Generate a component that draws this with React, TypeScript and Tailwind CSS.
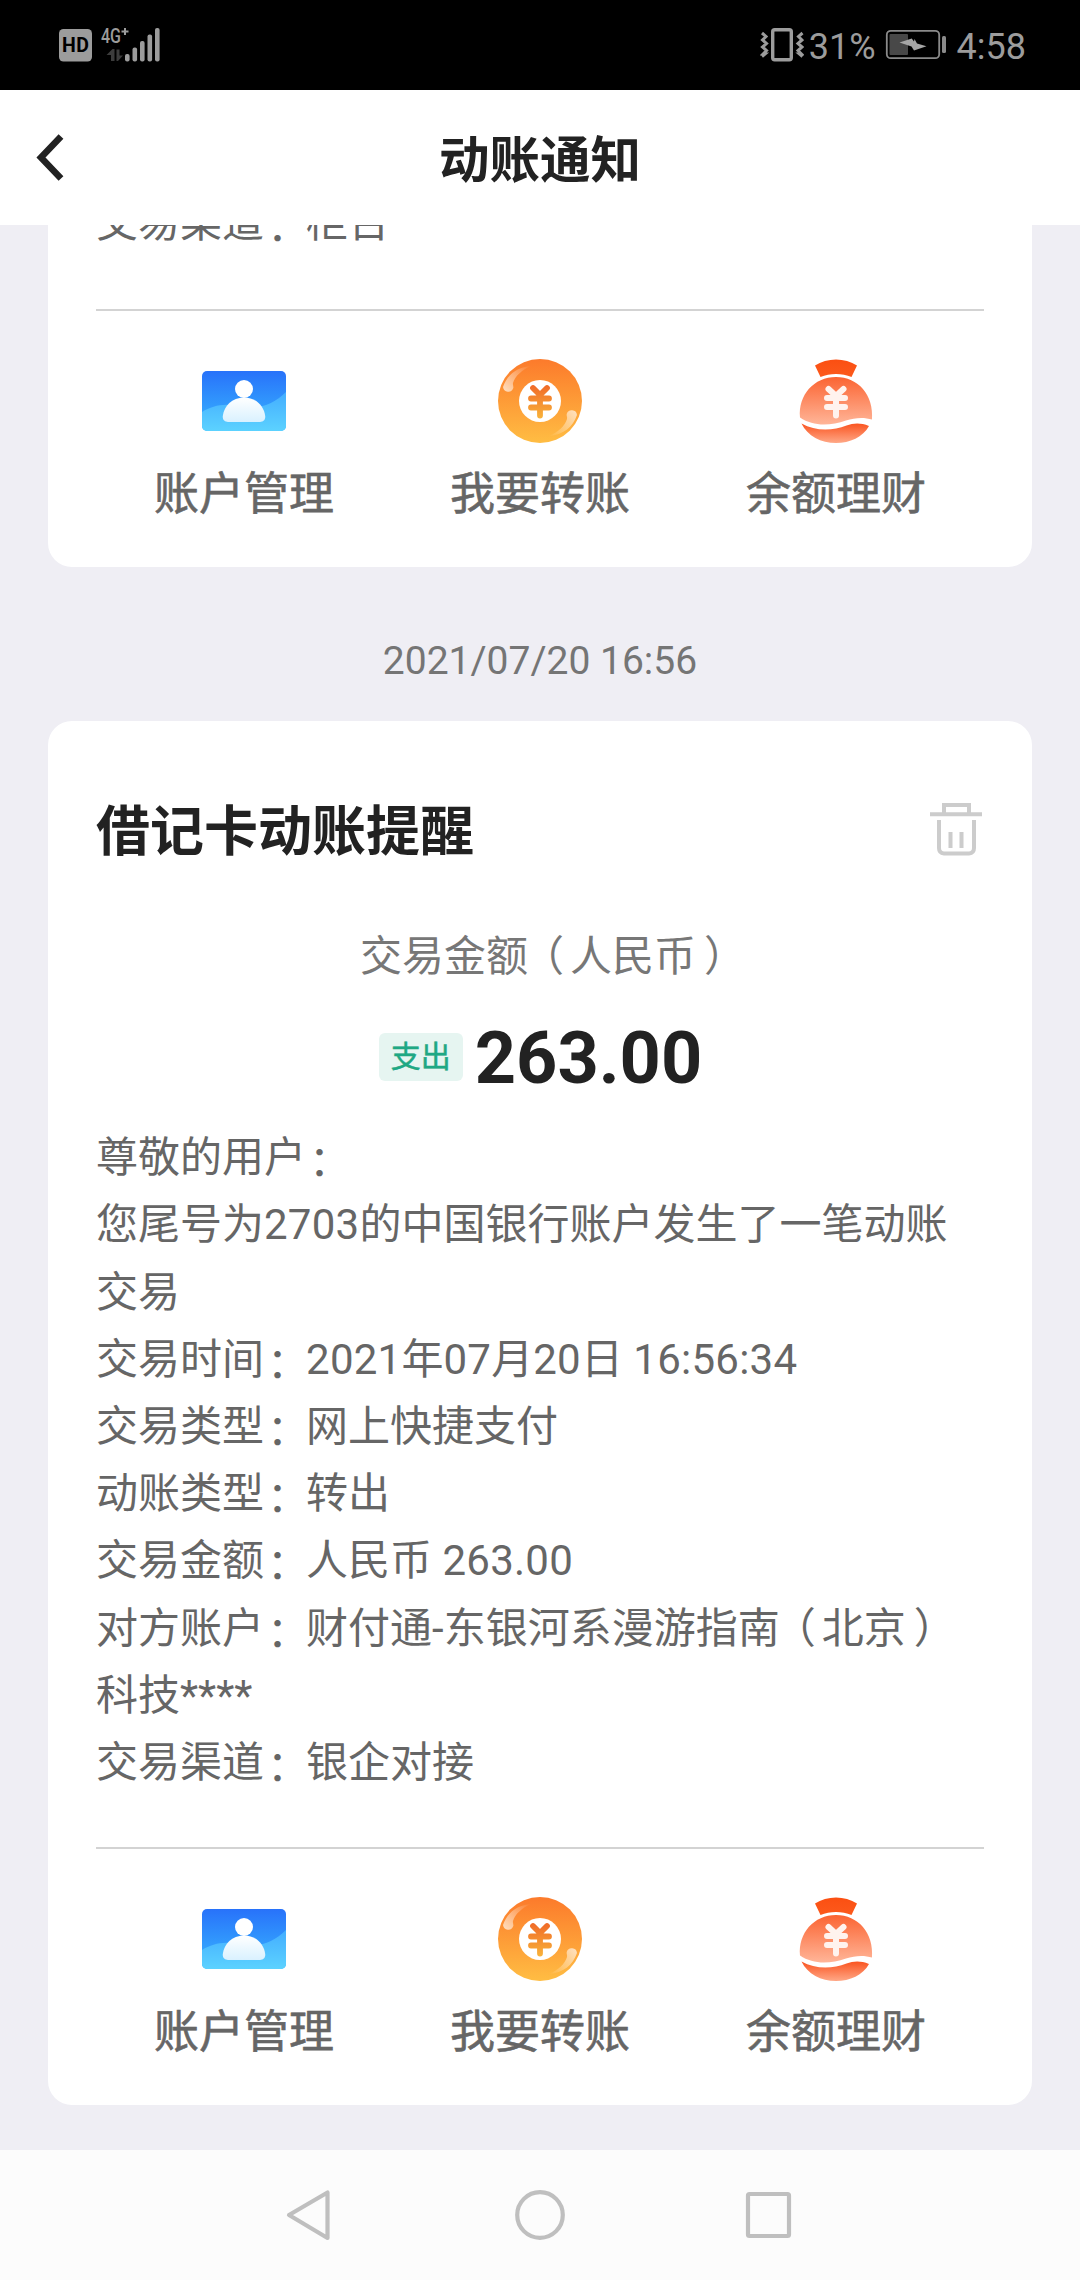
import { Fragment, useId } from 'react';

const bodyLines = [
  '尊敬的用户：',
  '您尾号为2703的中国银行账户发生了一笔动账',
  '交易',
  '交易时间：2021年07月20日 16:56:34',
  '交易类型：网上快捷支付',
  '动账类型：转出',
  '交易金额：人民币 263.00',
  '对方账户：财付通-东银河系漫游指南（北京）',
  '科技****',
  '交易渠道：银企对接',
];

// Full-width punctuation sits closer to the middle of its box
const punctClass: Record<string, string> = {
  '：': 'inline-block pl-[3px] -mr-[3px] align-[-4px]',
  '（': 'inline-block -ml-[6px] pr-[6px]',
  '）': 'inline-block pl-[8px] -mr-[8px]',
};

function Line({ text }: { text: string }) {
  return (
    <p className="h-[67.2px] leading-[67.2px] whitespace-pre">
      {text.split(/([：（）]|[\d:.]+)/).map((part, i) => {
        if (punctClass[part]) return <span key={i} className={punctClass[part]}>{part}</span>;
        if (/^\d/.test(part)) return <span key={i} className="tracking-[0.25px]">{part}</span>;
        return <Fragment key={i}>{part}</Fragment>;
      })}
    </p>
  );
}

function StatusBar() {
  return (
    <div className="h-[90px] bg-black flex items-center justify-between pl-[59px] pr-[54px] text-[#9c9c9c]">
      <svg width="104" height="40" viewBox="59 25 104 40" fill="currentColor">
        <rect x="59" y="29" width="33" height="32.5" rx="4.5" />
        <text x="75.5" y="52" textAnchor="middle" fontFamily="Roboto" fontWeight="700" fontSize="19.5" fill="#000" textLength="27">HD</text>
        <text x="101" y="42.5" fontFamily="Roboto" fontWeight="500" fontSize="20" textLength="20" lengthAdjust="spacingAndGlyphs">4G</text>
        <path d="M121.5 31.5h7M125 28v7" stroke="currentColor" strokeWidth="2" />
        <path d="M106.5 55l6-6h2v12h-3.500v-6zM116.500 49.500h3v6h3.500l-5 5.500h-1.500z" fill="#3c3c3c" />
        <rect x="125" y="54" width="4.6" height="7.5" rx="2" />
        <rect x="132.5" y="47.5" width="4.6" height="14" rx="2" />
        <rect x="140" y="41" width="4.6" height="20.5" rx="2" />
        <rect x="147.5" y="34.5" width="4.6" height="27" rx="2" />
        <rect x="155" y="28" width="4.6" height="33.5" rx="2" />
      </svg>
      <div className="flex items-center text-[36px] leading-[90px]">
        <svg width="44" height="36" viewBox="761 28 44 36" fill="none" stroke="currentColor">
          <rect x="773.7" y="30.7" width="18.6" height="30" rx="2" strokeWidth="3.4" />
          <path d="M763 34l4 3.500-3.500 3.500 4 3.500-4 3.500 4 3.500-3.500 3.500 2 0-3 2.500M803.500 34l-4 3.500 3.500 3.500-4 3.500 4 3.500-4 3.500 3.500 3.500-2 0 3 2.500" strokeWidth="3" />
        </svg>
        <span className="ml-[5px] pt-[3px]">31%</span>
        <svg className="ml-[9px]" width="62" height="34" viewBox="885 29 62 34">
          <rect x="886.8" y="31.8" width="52.4" height="27.4" rx="4" fill="none" stroke="#8a8a8a" strokeWidth="1.8" />
          <rect x="889.5" y="35" width="18.5" height="21" rx="1" fill="#484848" />
          <path d="M899.500 43.500L911.700 39.500L914 42.500L914.500 40L917 44.500L926.500 47.300L914 51.500L911.500 47.500z" fill="#a6a6a6" />
          <rect x="942" y="37" width="4" height="17" rx="1.5" fill="#8a8a8a" />
        </svg>
        <span className="ml-[10px] pt-[3px]">4:58</span>
      </div>
    </div>
  );
}

function AccountIcon() {
  const id = useId();
  return (
    <svg width="84" height="84" viewBox="0 0 84 84">
      <defs>
        <linearGradient id={`${id}bg`} x1="0" y1="0" x2="0" y2="1">
          <stop offset="0" stopColor="#2872fa" />
          <stop offset="1" stopColor="#39b8ff" />
        </linearGradient>
        <linearGradient id={`${id}wave`} x1="0" y1="0" x2="0" y2="1">
          <stop offset="0" stopColor="#43adff" />
          <stop offset="1" stopColor="#5cd2ff" />
        </linearGradient>
        <linearGradient id={`${id}man`} x1="0" y1="0" x2="0" y2="1">
          <stop offset="0" stopColor="#fff" />
          <stop offset="1" stopColor="#d9f1ff" />
        </linearGradient>
      </defs>
      <rect y="12" width="84" height="60" rx="5" fill={`url(#${id}bg)`} />
      <path d="M0 53c10-6 22-9 34-6 18 5 36 0 50-14v34a5 5 0 0 1-5 5H5a5 5 0 0 1-5-5z" fill={`url(#${id}wave)`} />
      <circle cx="42" cy="30" r="9" fill="#fff" />
      <path d="M42 38.500c12 0 20 8.500 21.200 18.500.4 4-2 6-5.200 6H26c-3.200 0-5.600-2-5.200-6C22 47 30 38.500 42 38.500z" fill={`url(#${id}man)`} />
    </svg>
  );
}

function TransferIcon() {
  const id = useId();
  return (
    <svg width="84" height="84" viewBox="0 0 84 84">
      <defs>
        <linearGradient id={`${id}coin`} x1="0" y1="0" x2="0" y2="1">
          <stop offset="0" stopColor="#fc7a2b" />
          <stop offset="1" stopColor="#ffbd43" />
        </linearGradient>
        <linearGradient id={`${id}yen`} gradientUnits="userSpaceOnUse" x1="0" y1="26" x2="0" y2="60">
          <stop offset="0" stopColor="#f06a28" />
          <stop offset="1" stopColor="#f9b43a" />
        </linearGradient>
        <linearGradient id={`${id}a`} gradientUnits="userSpaceOnUse" x1="8" y1="32" x2="34" y2="7">
          <stop offset="0" stopColor="#fff" stopOpacity=".65" />
          <stop offset="1" stopColor="#fff" stopOpacity="0" />
        </linearGradient>
        <linearGradient id={`${id}b`} gradientUnits="userSpaceOnUse" x1="76" y1="52" x2="50" y2="77">
          <stop offset="0" stopColor="#fff" stopOpacity=".65" />
          <stop offset="1" stopColor="#fff" stopOpacity="0" />
        </linearGradient>
      </defs>
      <circle cx="42" cy="42" r="42" fill={`url(#${id}coin)`} />
      <path d="M5 28C9 16 19 8 33 7c-9 4-16 10-18 17-.5 2 .7 3 .3 5A5.300 5.300 0 0 1 5 28z" fill={`url(#${id}a)`} />
      <path d="M79 56c-4 12-14 20-28 21 9-4 16-10 18-17 .5-2-.7-3-.3-5A5.300 5.300 0 0 1 79 56z" fill={`url(#${id}b)`} />
      <circle cx="42" cy="42" r="21" fill="#fff" />
      <path d="M35 29l7 7 7-7M42 37v19.500M33 39.500h18M33 48.500h18" fill="none" stroke={`url(#${id}yen)`} strokeWidth="5.8" strokeLinecap="round" />
    </svg>
  );
}

function MoneyBagIcon() {
  const id = useId();
  return (
    <svg width="84" height="84" viewBox="0 0 84 84">
      <defs>
        <linearGradient id={`${id}top`} x1="0" y1="0" x2="0" y2="1">
          <stop offset="0" stopColor="#fb4f12" />
          <stop offset="1" stopColor="#fc5a1c" />
        </linearGradient>
        <linearGradient id={`${id}bag`} x1="0" y1="0" x2="0" y2="1">
          <stop offset="0" stopColor="#fb6432" />
          <stop offset="1" stopColor="#ffb598" />
        </linearGradient>
        <linearGradient id={`${id}base`} x1="0" y1="0" x2="0" y2="1">
          <stop offset="0" stopColor="#fa5420" />
          <stop offset="1" stopColor="#ffa887" />
        </linearGradient>
      </defs>
      <path d="M21 6.500C33-1.500 51-1.500 63 6.500L57.500 18C48 14 36 14 26.500 18z" fill={`url(#${id}top)`} />
      <path d="M6 58.500C4 36 20 18 42 18s38 18 36 42.500c-8-2.500-17-2-26 1-16 5.500-33 6-46-3z" fill={`url(#${id}bag)`} />
      <path d="M7.500 64.500c14 8 31 7.500 45 2 7-2.500 14-3 22.500.5C69 78 56 84 42 84 27 84 13.500 77 7.500 64.500z" fill={`url(#${id}base)`} />
      <path d="M34.500 30l7.500 7 7.500-7M42 38v18.500M33 39h18M33 48h18" fill="none" stroke="#fff3ee" strokeWidth="6" strokeLinecap="round" />
    </svg>
  );
}

const actions = [
  { label: '账户管理', Icon: AccountIcon },
  { label: '我要转账', Icon: TransferIcon },
  { label: '余额理财', Icon: MoneyBagIcon },
];

function CardActions() {
  return (
    <div className="h-[258px] border-t-2 border-[#d3d3d3] pt-[48px] grid grid-cols-3">
      {actions.map(({ label, Icon }) => (
        <button key={label} className="flex flex-col items-center">
          <Icon />
          <span className="mt-[18px] text-[45px] leading-[68px] text-[#666] [-webkit-text-stroke:0.6px_#666]">{label}</span>
        </button>
      ))}
    </div>
  );
}

export default function App() {
  return (
    <div className="w-[1080px] h-[2280px] flex flex-col overflow-hidden bg-[#efeef4] font-['Roboto','Noto_Sans_CJK_SC',sans-serif]">
      <StatusBar />

      {/* Header */}
      <header className="h-[135px] shrink-0 bg-white grid grid-cols-[100px_1fr_100px] items-center">
        <svg className="ml-[35px]" width="32" height="48" viewBox="0 0 32 48" fill="none" stroke="#222" strokeWidth="6.6">
          <path d="M26 2.500L6 23.500l20 21" />
        </svg>
        <h1 className="pt-[6px] text-center text-[50.5px] font-bold text-[#222]">动账通知</h1>
      </header>

      {/* Messages */}
      <main className="flex-1 min-h-0 overflow-hidden px-[48px]">
        <section className="-mt-[36px] bg-white rounded-b-[24px] px-[48px] text-[42px] text-[#666]">
          <Line text="交易渠道：柜台" />
          <div className="h-[53px]" />
          <CardActions />
        </section>

        <p className="h-[154px] pt-[2px] leading-[184px] text-center text-[39px] text-[#757575]">2021/07/20 16:56</p>

        <section className="bg-white rounded-[24px] px-[48px] pt-[70px] text-[42px] text-[#666]">
          <div className="h-[80px] flex items-center justify-between">
            <h2 className="pt-[3px] text-[54px] font-bold text-[#222]">借记卡动账提醒</h2>
            <svg className="mr-px mb-[3px]" width="53" height="53" viewBox="0 0 53 53" fill="none" stroke="#ccc" strokeWidth="4">
              <path d="M0 11.200h52M14 10V2h25v8" />
              <path d="M9 17v28q0 5 5 5.500h25q5-.5 5-5.500V17" />
              <path d="M20.500 29v16M31.500 29v16" />
            </svg>
          </div>
          <p className="mt-[56px] h-[60px] leading-[60px] text-center text-[#777]">
            交易金额<span className="inline-block -ml-[6px] pr-[6px]">（</span>人民币<span className="inline-block pl-[8px] -mr-[26px]">）</span>
          </p>
          <div className="mt-[28px] h-[84px] flex items-center justify-center">
            <span className="ml-px w-[84px] h-[48px] rounded-[6px] bg-[#e6f5f1] text-[#1fa884] text-[30px] leading-[47px] text-center [-webkit-text-stroke:0.5px_#1fa884]">支出</span>
            <span className="ml-[12px] pt-[3px] text-[72px] leading-[84px] font-bold text-[#222]">263.00</span>
          </div>
          <div className="mt-[25px] mb-[51px]">
            {bodyLines.map((text) => (
              <Line key={text} text={text} />
            ))}
          </div>
          <CardActions />
        </section>
      </main>

      {/* System navigation */}
      <nav className="h-[130px] shrink-0 bg-[#fcfcfc] flex items-center justify-center">
        <svg width="510" height="54" viewBox="285.5 2188 510 54" fill="none" stroke="#bfbfbf" strokeWidth="4.2" strokeLinejoin="round">
          <path d="M328 2192.500v45.500L289.500 2215z" />
          <circle cx="540.5" cy="2215" r="22.800" />
          <rect x="748.500" y="2194" width="41" height="42" rx="1.500" />
        </svg>
      </nav>
    </div>
  );
}
